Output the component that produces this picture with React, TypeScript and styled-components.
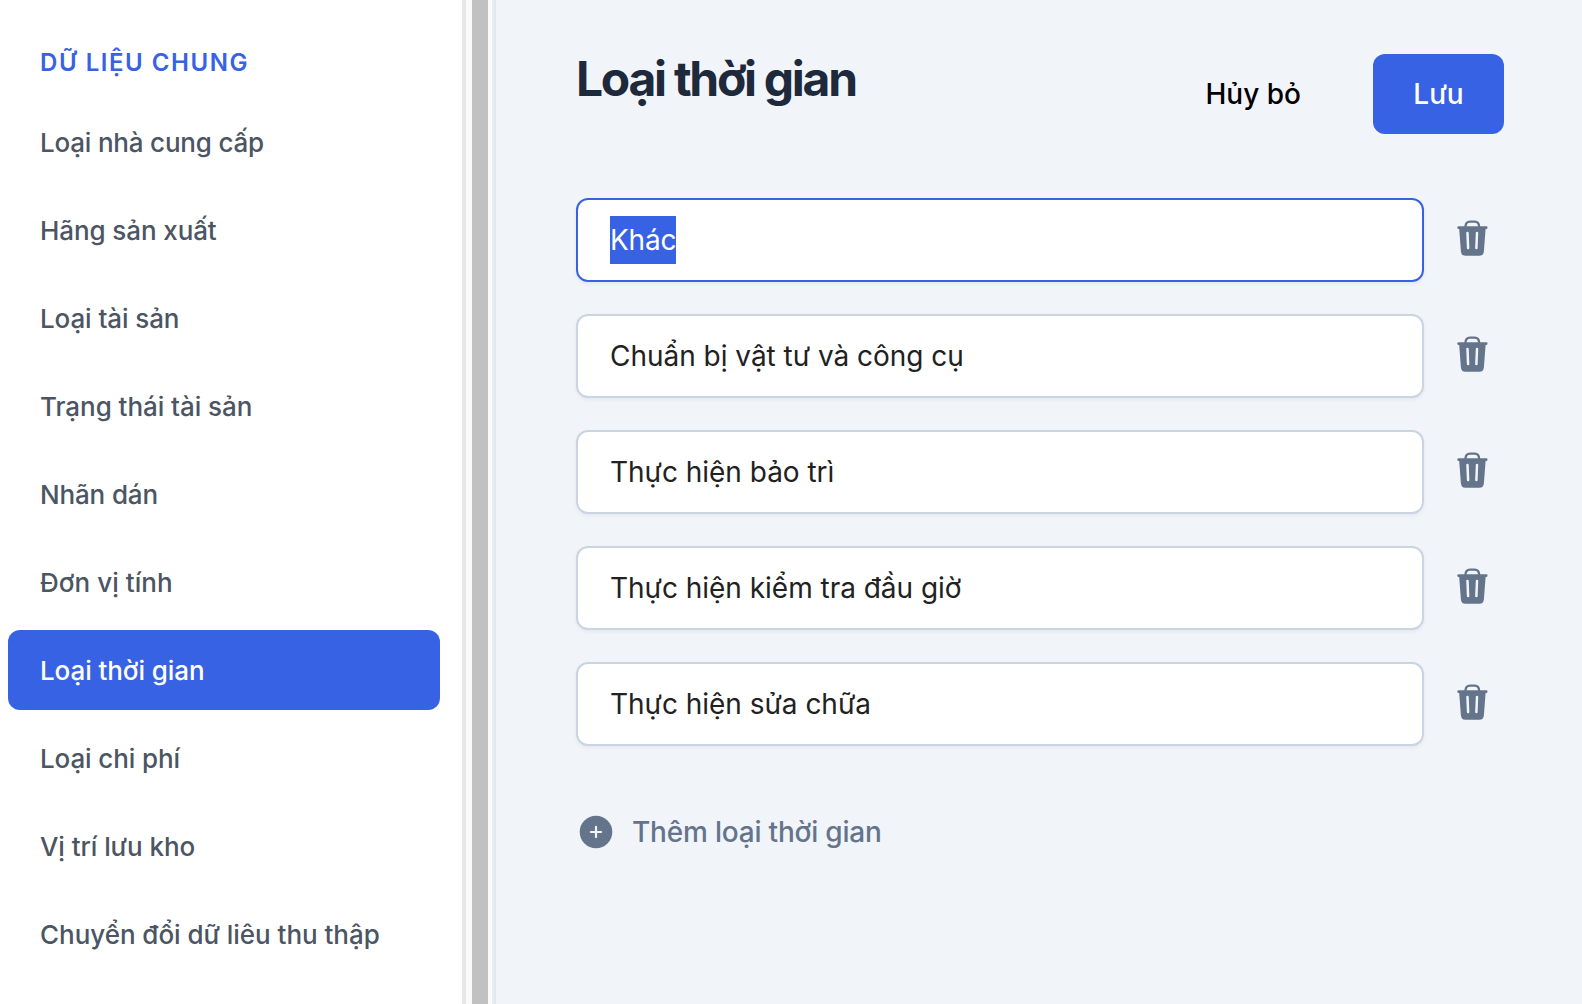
import React, { useState } from "react";
import styled, { createGlobalStyle } from "styled-components";

const GlobalStyle = createGlobalStyle`
  *, *::before, *::after { box-sizing: border-box; }
  body {
    margin: 0;
    overflow: hidden;
    background: #f1f5fa;
    font-family: Inter, "Noto Sans", sans-serif;
  }
  button { font-family: inherit; border: 0; background: none; cursor: pointer; }
`;

const Page = styled.div`
  display: flex;
  height: 100vh;
`;

const Sidebar = styled.nav`
  width: 466px;
  flex-shrink: 0;
  padding: 48px 22px 0 8px;
  background: #fff;
  border-right: 4px solid #e5e8eb;
`;

const SidebarTitle = styled.h2`
  margin: 0 0 24px;
  padding: 0 32px;
  font-size: 24px;
  line-height: 30px;
  font-weight: 600;
  letter-spacing: 1.55px;
  text-transform: uppercase;
  color: #3862e4;
`;

const NavList = styled.ul`
  display: flex;
  flex-direction: column;
  gap: 8px;
  margin: 0;
  padding: 0;
  list-style: none;
`;

const NavItem = styled.li<{ $active: boolean; $tracking: number }>`
  display: flex;
  align-items: center;
  height: 80px;
  padding: 0 32px;
  border-radius: 12px;
  font-size: 26px;
  font-weight: 500;
  letter-spacing: ${(p) => p.$tracking}px;
  white-space: nowrap;
  cursor: pointer;
  color: ${(p) => (p.$active ? "#fff" : "#4b5563")};
  background: ${(p) => (p.$active ? "#3862e4" : "transparent")};
`;

const ScrollTrack = styled.div`
  width: 28px;
  flex-shrink: 0;
  padding: 0 4px 0 6px;
  background: #fafafa;
  border-right: 2px solid #ededed;
`;

const ScrollThumb = styled.div`
  height: 100%;
  background: #c1c1c1;
`;

const Main = styled.main`
  flex: 1;
  padding: 54px 78px 0 80px;
  border-left: 2px solid #e2e8f0;
`;

const Header = styled.header`
  display: flex;
  justify-content: space-between;
  align-items: flex-start;
  height: 80px;
  margin-bottom: 64px;
`;

const Title = styled.h1`
  margin: 0;
  font-size: 48px;
  line-height: 50px;
  font-weight: 700;
  letter-spacing: -2.28px;
  color: #1e293b;
`;

const Actions = styled.div`
  display: flex;
  gap: 32px;
`;

const Button = styled.button<{ $primary?: boolean }>`
  min-width: 131px;
  height: 80px;
  padding: 0 40px;
  border-radius: 12px;
  font-size: 28px;
  font-weight: 500;
  color: ${(p) => (p.$primary ? "#fff" : "#000")};
  background: ${(p) => (p.$primary ? "#3862e4" : "transparent")};
`;

const Rows = styled.div`
  display: flex;
  flex-direction: column;
  gap: 32px;
`;

const Row = styled.div`
  display: flex;
  align-items: center;
  gap: 28px;
`;

const Field = styled.div<{ $focused: boolean }>`
  display: flex;
  align-items: center;
  width: 848px;
  height: 84px;
  padding: 0 32px;
  border: 2px solid ${(p) => (p.$focused ? "#3862e4" : "#cbd5e1")};
  border-radius: 12px;
  background: #fff;
  box-shadow: 0 2px 4px rgba(0, 0, 0, 0.05);
  font-size: 28px;
  letter-spacing: -0.02px;
  color: #212121;
`;

const FieldText = styled.span<{ $selected: boolean }>`
  line-height: 48px;
  letter-spacing: ${(p) => (p.$selected ? "-0.2px" : "inherit")};
  color: ${(p) => (p.$selected ? "#fff" : "inherit")};
  background: ${(p) => (p.$selected ? "#3862e4" : "transparent")};
`;

const IconButton = styled.button`
  display: flex;
  padding: 0;
  margin-bottom: 4px;
  color: #64748b;
`;

const AddButton = styled.button`
  display: flex;
  align-items: center;
  gap: 16px;
  margin-top: 62px;
  padding: 0;
  font-size: 28px;
  line-height: 48px;
  font-weight: 500;
  letter-spacing: -0.2px;
  color: #64748b;
`;

const TrashIcon = () => (
  <svg width="40" height="40" viewBox="0 0 40 40" fill="none">
    <path d="M13.4 9.2C13.4 5.6 15 3.6 18 3.6h4.6c3 0 4.6 2 4.6 5.6" stroke="currentColor" strokeWidth="2.4" />
    <path
      fill="currentColor"
      d="M6.3 8.2h28.2c1.4 0 1.4 2.7 0 2.7h-.9L31.9 33.3c-.3 3.2-1.6 4.4-4.6 4.4H13.5c-3 0-4.3-1.2-4.6-4.4L7.2 10.9h-.9c-1.4 0-1.4-2.7 0-2.7z"
    />
    <path d="M15.5 15l.6 15M25 15l-.6 15" stroke="#f1f5fa" strokeWidth="2.5" strokeLinecap="round" />
  </svg>
);

const AddIcon = () => (
  <svg width="40" height="40" viewBox="0 0 40 40">
    <circle cx="20" cy="20" r="16.3" fill="currentColor" />
    <path d="M20 14.9v10.2M14.9 20h10.2" stroke="#f1f5fa" strokeWidth="2.2" strokeLinecap="round" />
  </svg>
);

const categories = [
  { name: "Loại nhà cung cấp", tracking: -0.2 },
  { name: "Hãng sản xuất", tracking: -0.1 },
  { name: "Loại tài sản", tracking: -0.1 },
  { name: "Trạng thái tài sản", tracking: -0.05 },
  { name: "Nhãn dán", tracking: -0.15 },
  { name: "Đơn vị tính", tracking: 0.05 },
  { name: "Loại thời gian", tracking: -0.08 },
  { name: "Loại chi phí", tracking: -0.12 },
  { name: "Vị trí lưu kho", tracking: -0.07 },
  { name: "Chuyển đổi dữ liêu thu thập", tracking: -0.04 },
];

const timeTypes = [
  "Khác",
  "Chuẩn bị vật tư và công cụ",
  "Thực hiện bảo trì",
  "Thực hiện kiểm tra đầu giờ",
  "Thực hiện sửa chữa",
];

export default function App() {
  const [active, setActive] = useState("Loại thời gian");
  const [focused, setFocused] = useState(0);

  return (
    <>
      <GlobalStyle />
      <Page>
        <Sidebar>
          <SidebarTitle>Dữ liệu chung</SidebarTitle>
          <NavList>
            {categories.map(({ name, tracking }) => (
              <NavItem
                key={name}
                $active={name === active}
                $tracking={tracking}
                onClick={() => setActive(name)}
              >
                {name}
              </NavItem>
            ))}
          </NavList>
        </Sidebar>
        <ScrollTrack>
          <ScrollThumb />
        </ScrollTrack>
        <Main>
          <Header>
            <Title>Loại thời gian</Title>
            <Actions>
              <Button>Hủy bỏ</Button>
              <Button $primary>Lưu</Button>
            </Actions>
          </Header>
          <Rows>
            {timeTypes.map((name, i) => (
              <Row key={name}>
                <Field $focused={i === focused} onClick={() => setFocused(i)}>
                  <FieldText $selected={i === focused}>{name}</FieldText>
                </Field>
                <IconButton aria-label="Xóa">
                  <TrashIcon />
                </IconButton>
              </Row>
            ))}
          </Rows>
          <AddButton>
            <AddIcon />
            Thêm loại thời gian
          </AddButton>
        </Main>
      </Page>
    </>
  );
}
